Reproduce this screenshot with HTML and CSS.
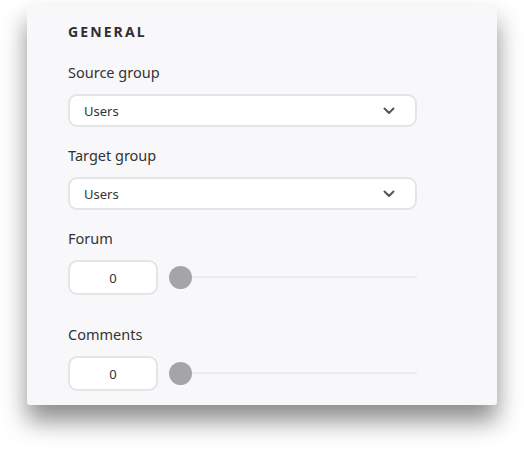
FILE: index.html
```html
<!DOCTYPE html>
<html lang="en">
<head>
    <meta charset="UTF-8">
    <meta name="viewport" content="width=device-width, initial-scale=1.0">
    <title>General settings</title>
    <link rel="stylesheet" href="styles.css">
</head>
<body>
    <div class="panel">
        <h2>General</h2>

        <div class="field">
            <label>Source group</label>
            <div class="select">
                <span>Users</span>
                <svg width="12" height="8" viewBox="0 0 12 8"><path d="M1.5 1.5 L6 6 L10.5 1.5" fill="none" stroke="#555" stroke-width="2" stroke-linecap="round" stroke-linejoin="round"/></svg>
            </div>
        </div>

        <div class="field">
            <label>Target group</label>
            <div class="select">
                <span>Users</span>
                <svg width="12" height="8" viewBox="0 0 12 8"><path d="M1.5 1.5 L6 6 L10.5 1.5" fill="none" stroke="#555" stroke-width="2" stroke-linecap="round" stroke-linejoin="round"/></svg>
            </div>
        </div>

        <div class="field range-field">
            <label>Forum</label>
            <div class="range-row">
                <input type="text" class="number" value="0">
                <div class="slider"><div class="knob"></div></div>
            </div>
        </div>

        <div class="field range-field">
            <label>Comments</label>
            <div class="range-row">
                <input type="text" class="number" value="0">
                <div class="slider"><div class="knob"></div></div>
            </div>
        </div>
    </div>
</body>
</html>
```

FILE: styles.css
```css
html {
    background-color: #fff;
}

body {
    font-family: "Noto Sans", "Open Sans", sans-serif;
    margin: 0;
    padding: 5px 0 49px 27px;
    min-height: 399px;
    color: #333;
}

.panel {
    width: 349px;
    padding: 17px 80px 14px 41px;
    background-color: #f8f8fa;
    border-radius: 3px;
    box-shadow: 0 16px 24px rgba(0, 0, 0, 0.45);
}

h2 {
    margin: 0 0 20px;
    font-size: 14px;
    line-height: 20px;
    font-weight: 700;
    letter-spacing: 2.1px;
    text-transform: uppercase;
    color: #2e2e33;
}

.field {
    margin-bottom: 18px;
}

.field.range-field {
    margin-bottom: 29px;
}

.field:last-child {
    margin-bottom: 0;
}

label {
    display: block;
    font-size: 14.5px;
    line-height: 20px;
    margin: 0 0 12px;
    color: #333;
}

.select {
    display: flex;
    align-items: center;
    justify-content: space-between;
    height: 29px;
    padding: 0 20px 0 14px;
    background-color: #fff;
    border: 2px solid #e5e5e8;
    border-radius: 9px;
    font-size: 13px;
    color: #333;
}

.range-row {
    display: flex;
    align-items: center;
    gap: 11px;
}

.number {
    box-sizing: border-box;
    width: 90px;
    height: 35px;
    margin: 0;
    padding: 0;
    border: 2px solid #e5e5e8;
    border-radius: 9px;
    background-color: #fff;
    font-family: inherit;
    font-size: 13px;
    color: #333;
    text-align: center;
}

.slider {
    position: relative;
    flex: 1;
    height: 23px;
}

.slider::before {
    content: "";
    position: absolute;
    left: 11px;
    right: 0;
    top: 10px;
    height: 2px;
    background-color: #ebebef;
}

.knob {
    position: absolute;
    left: 0;
    top: 0;
    width: 23px;
    height: 23px;
    border-radius: 50%;
    background-color: #a5a5a9;
}
```
